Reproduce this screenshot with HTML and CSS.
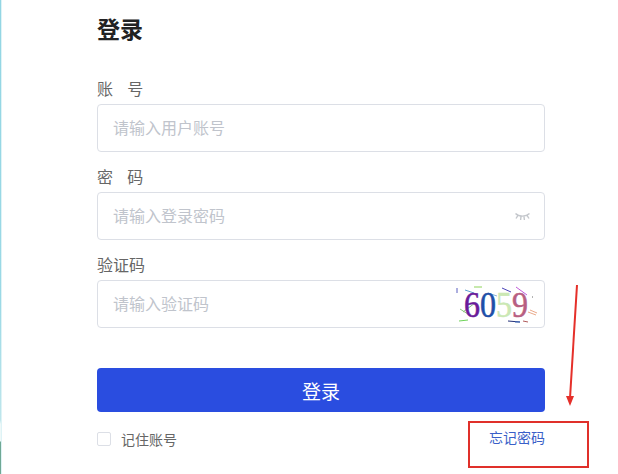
FILE: index.html
```html
<!DOCTYPE html>
<html lang="zh">
<head>
<meta charset="utf-8">
<title>登录</title>
<link rel="stylesheet" href="styles.css">
</head>
<body>
<div class="page">
  <div class="edge"></div>
  <main class="form">
    <h1 class="title">登录</h1>
    <label class="label label-first">账&nbsp;&nbsp;&nbsp;&nbsp;号</label>
    <div class="field"><span class="ph">请输入用户账号</span></div>
    <label class="label">密&nbsp;&nbsp;&nbsp;&nbsp;码</label>
    <div class="field">
      <span class="ph">请输入登录密码</span>
      <svg class="eye" width="15" height="9" viewBox="0 0 15 9" fill="none" stroke="#c4c7cc" stroke-width="1.4">
        <path d="M0.5 1.5C4 5 11 5 14.5 1.5M2.8 3.6L1 6.5M6 4.6L5.6 8M9 4.6L9.4 8M12.2 3.6L14 6.5"/>
      </svg>
    </div>
    <label class="label">验证码</label>
    <div class="field">
      <span class="ph">请输入验证码</span>
      <svg class="captcha" width="90" height="48" viewBox="0 0 90 48">
        <g stroke-width="1" fill="none">
          <path d="M2 8V13" stroke="#5a5fc0"/>
          <path d="M10 10L19 13" stroke="#5c9ed0"/>
          <path d="M19 7H27" stroke="#8fd35a"/>
          <path d="M47 8L56 12" stroke="#4a42b8"/>
          <path d="M61 7L72 15" stroke="#c05ad8"/>
          <path d="M33 13L42 16" stroke="#8ab0d9"/>
          <path d="M77 17h1" stroke="#666"/>
          <path d="M8 32L20 23" stroke="#7fb87f"/>
          <path d="M5 29L16 36" stroke="#8cc97a"/>
          <path d="M73 32L81 35M75 30L82 33" stroke="#eaa98a"/>
          <path d="M4 41L13 40" stroke="#6fd35a"/>
          <path d="M53 41L65 42" stroke="#24307a"/>
          <path d="M60 42H65" stroke="#3f6fc0"/>
          <path d="M68 41L73 42" stroke="#b05a5a"/>
        </g>
        <g transform="scale(1 1.09)">
          <text class="digit digit-a" x="9" y="34">6</text>
          <text class="digit digit-b" x="25" y="34">0</text>
          <text class="digit digit-c" x="41" y="34">5</text>
          <text class="digit digit-d" x="57" y="34">9</text>
        </g>
      </svg>
    </div>
    <button class="submit" type="button">登录</button>
    <div class="foot">
      <span class="remember"><span class="check"></span>记住账号</span>
      <a class="forgot">忘记密码</a>
    </div>
  </main>
  <svg class="marks" width="618" height="474" viewBox="0 0 618 474" fill="none">
    <path d="M577 285L570 398" stroke="#e5302a" stroke-width="2"/>
    <path d="M566 396L574 396L570 406Z" fill="#e5302a"/>
    <rect x="469" y="422" width="119" height="45" stroke="#e0302a" stroke-width="2"/>
  </svg>
</div>
</body>
</html>
```
FILE: styles.css
```css
html, body {
  margin: 0;
  padding: 0;
  background: #fff;
}
.page {
  position: relative;
  display: flex;
  width: 618px;
  height: 474px;
  overflow: hidden;
  font-family: "Noto Sans CJK SC", "Liberation Sans", sans-serif;
}
.edge {
  width: 1px;
  background: linear-gradient(#93d6e4 0, #9bd9e6 300px, #bfe6ec 420px, #eef8f8 424px, #eef8f8 441px, #6fa894 442px);
  box-shadow: 1px 0 0 rgba(160, 220, 230, 0.35);
}
.form {
  display: flex;
  flex-direction: column;
  width: 448px;
  margin-left: 96px;
}
.title {
  margin: 12px 0 0;
  font-size: 23px;
  line-height: 32px;
  font-weight: 700;
  color: #222;
}
.label {
  display: block;
  height: 24px;
  margin-top: 12px;
  font-size: 16px;
  line-height: 24px;
  color: #666;
}
.label-first {
  margin-top: 32px;
}
.field {
  position: relative;
  display: flex;
  align-items: center;
  box-sizing: border-box;
  height: 48px;
  margin-top: 4px;
  padding: 0 15px 2px;
  border: 1px solid #dcdfe6;
  border-radius: 4px;
}
.ph {
  font-size: 16px;
  color: #c0c4cc;
}
.eye {
  position: absolute;
  right: 14px;
  top: 19px;
}
.captcha {
  position: absolute;
  right: -1px;
  top: -1px;
}
.digit {
  font-family: "Liberation Serif", serif;
  font-size: 32px;
  stroke-width: 0.5;
}
.digit-a { fill: #6a1b9a; stroke: #6a1b9a; }
.digit-b { fill: #1f4fa8; stroke: #1f4fa8; }
.digit-c { fill: #cbe8b4; stroke: #cbe8b4; }
.digit-d { fill: #b85f82; stroke: #b85f82; }
.submit {
  height: 44px;
  margin-top: 40px;
  border: 0;
  border-radius: 4px;
  background: #2a4de0;
  color: #fff;
  font-family: inherit;
  font-size: 19px;
}
.foot {
  display: flex;
  justify-content: space-between;
  align-items: center;
  margin-top: 15px;
  height: 24px;
  font-size: 14px;
}
.remember {
  display: flex;
  align-items: center;
  gap: 10px;
  color: #666;
}
.check {
  box-sizing: border-box;
  width: 14px;
  height: 14px;
  border: 1px solid #dcdfe6;
  border-radius: 2px;
}
.forgot {
  color: #3a5fc8;
  margin-top: -4px;
}
.marks {
  position: absolute;
  left: 0;
  top: 0;
  pointer-events: none;
}
```
